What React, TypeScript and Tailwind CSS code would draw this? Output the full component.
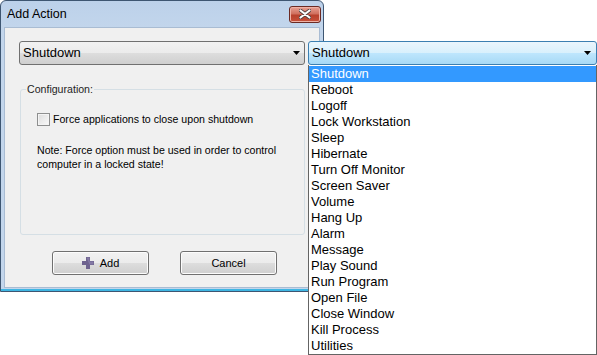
const items = [
  "Shutdown",
  "Reboot",
  "Logoff",
  "Lock Workstation",
  "Sleep",
  "Hibernate",
  "Turn Off Monitor",
  "Screen Saver",
  "Volume",
  "Hang Up",
  "Alarm",
  "Message",
  "Play Sound",
  "Run Program",
  "Open File",
  "Close Window",
  "Kill Process",
  "Utilities",
];

function Arrow() {
  return (
    <svg width="7" height="4" viewBox="0 0 7 4">
      <path d="M0 0h7L3.5 4z" fill="#000" />
    </svg>
  );
}

function Button({ children }: { children: React.ReactNode }) {
  return (
    <button className="w-[97px] h-[24px] flex items-center justify-center gap-[6px] rounded-[3px] border border-[#707070] bg-[linear-gradient(#f2f2f2_0%,#ebebeb_50%,#dddddd_51%,#cfcfcf_100%)] text-[11px] text-black shadow-[inset_0_0_0_1px_#fcfcfc]">
      {children}
    </button>
  );
}

export default function App() {
  return (
    <div className="relative w-[597px] h-[355px] bg-white font-['Liberation_Sans',Arial,sans-serif] overflow-hidden">
      {/* window */}
      <div className="w-[324px] h-[292px] flex flex-col rounded-t-[6px] border border-[#3e5672] bg-[linear-gradient(#bcd1ea,#c3d6ec_30px,#c3d6ec)] shadow-[inset_0_-2px_0_#3fb6e3]">
        <div className="h-[26px] flex items-center justify-between pl-[6px] pr-[2px] pt-[1px]">
          <span className="text-[12.5px] text-black">Add Action</span>
          <div className="w-[32px] h-[17px] -mt-[1px] rounded-[3px] border border-[#6b2a23] bg-[linear-gradient(#e8a093,#d0705f_45%,#b8412d_55%,#c7513b)] flex items-center justify-center shadow-[inset_0_0_0_1px_#eeb1a5]">
            <svg width="12" height="10" viewBox="0 0 12 10">
              <path d="M1.5 1.5l9 7M10.5 1.5l-9 7" stroke="#4a3b3b" strokeWidth="3.6" strokeLinecap="round" />
              <path d="M1.5 1.5l9 7M10.5 1.5l-9 7" stroke="#fff" strokeWidth="2.2" strokeLinecap="round" />
            </svg>
          </div>
        </div>
        <div className="flex-1 mx-[3px] mb-[3px] bg-[#f0f0f0] border border-[#a9bcd3] flex flex-col pl-[14px] pr-[14px] pt-[13px]">
          <div className="h-[24px] flex items-center justify-between rounded-[3px] border border-[#707070] bg-[linear-gradient(#f2f2f2_0%,#ebebeb_50%,#dddddd_51%,#cfcfcf_100%)] pl-[3px] pr-[4px]">
            <span className="text-[13px] text-black">Shutdown</span>
            <Arrow />
          </div>
          <fieldset className="mt-[17px] ml-[1px] h-[153px] border border-[#d5dfe5] rounded-[3px] px-[6px] pt-0 m-0">
            <legend className="text-[10.6px] text-[#1e1e1e] px-[1px] -ml-[1px]">Configuration:</legend>
            <div className="flex items-center gap-[3px] mt-[14px] ml-[10px]">
              <div className="w-[13px] h-[13px] border border-[#8e8f8f] bg-[linear-gradient(135deg,#dcdcdc,#fafafa)] shadow-[inset_0_0_0_1px_#f4f4f4]" />
              <span className="text-[10.6px] text-black">Force applications to close upon shutdown</span>
            </div>
            <p className="mt-[15px] ml-[10px] text-[10.6px] leading-[14px] text-black">
              Note: Force option must be used in order to control
              <br />
              computer in a locked state!
            </p>
          </fieldset>
          <div className="flex gap-[31px] ml-[33px] mt-[16px]">
            <Button>
              <svg width="12" height="12" viewBox="0 0 12 12">
                <path d="M4 0h4v4h4v4H8v4H4V8H0V4h4z" fill="#6e638f" />
                <path d="M4.5 0.5h3v4h4v3h-4" fill="#9a8fbc" opacity="0.5" />
              </svg>
              <span>Add</span>
            </Button>
            <Button>Cancel</Button>
          </div>
        </div>
      </div>

      {/* open dropdown */}
      <div className="absolute left-[308px] top-[41px] w-[289px] flex flex-col">
        <div className="h-[24px] flex items-center justify-between rounded-[3px] border border-[#3c7fb1] bg-[linear-gradient(#eaf6fd_0%,#d9f0fc_50%,#bee6fd_51%,#a7d9f5_100%)] pl-[3px] pr-[5px]">
          <span className="text-[13px] text-black">Shutdown</span>
          <Arrow />
        </div>
        <div className="h-[290px] border border-[#646464] border-t-0 bg-white flex flex-col pt-[1px]">
          {items.map((it, i) => (
            <div
              key={it}
              className={
                i === 0
                  ? "h-[16px] leading-[16px] pl-[2px] text-[13px] bg-[#3399ff] text-white"
                  : "h-[16px] leading-[16px] pl-[2px] text-[13px] text-black"
              }
            >
              {it}
            </div>
          ))}
        </div>
      </div>
    </div>
  );
}
